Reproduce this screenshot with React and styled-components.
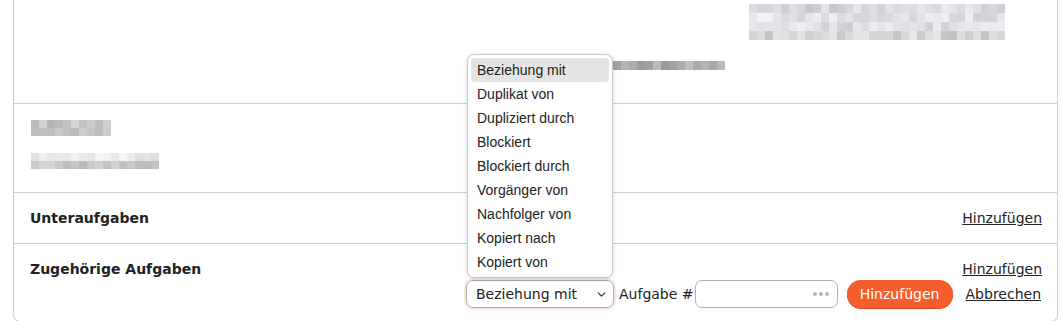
import React from 'react';
import styled, { createGlobalStyle } from 'styled-components';
import { ChevronDown } from 'lucide-react';

const GlobalStyle = createGlobalStyle`
  html, body {
    margin: 0;
    padding: 0;
    background: #fff;
    font-family: "DejaVu Sans", Verdana, sans-serif;
    font-size: 14px;
    color: #222;
  }
`;

const Page = styled.div`
  padding: 0 3px 0 13px;
  height: 321px;
  overflow: hidden;
`;

const Card = styled.div`
  width: 1045px;
  box-sizing: border-box;
  border: 1px solid #cfcfcf;
  border-top: none;
  border-radius: 0 0 7px 7px;
`;

const Section = styled.div`
  box-sizing: border-box;
  height: ${({ h }) => h}px;
  padding: ${({ pad }) => pad || '0'};
  border-bottom: ${({ last }) => (last ? 'none' : '1px solid #cfcfcf')};
  position: relative;
`;

const HeadRow = styled.div`
  display: flex;
  justify-content: space-between;
  align-items: center;
  line-height: 20px;
  padding: 0 15px 0 16px;
`;

const Title = styled.div`
  font-weight: bold;
  font-size: 14px;
`;

const Link = styled.a`
  color: #222;
  text-decoration: underline;
  cursor: pointer;
`;

const BlurBlock = styled.div`
  display: grid;
  grid-template-columns: repeat(${({ cols }) => cols}, 8px);
  grid-auto-rows: ${({ rowh }) => rowh || 8}px;
  margin: ${({ m }) => m || '0'};
  width: max-content;
`;

const Cell = styled.span`
  display: block;
`;

const TopBlurs = styled.div`
  display: flex;
  flex-direction: column;
  padding-top: 4px;
`;

const FormRow = styled.div`
  display: flex;
  justify-content: flex-end;
  align-items: center;
  padding-right: 16px;
  margin-top: 1px;
`;

const SelectWrap = styled.div`
  position: relative;
  width: 148px;
  height: 28px;
`;

const Select = styled.div`
  box-sizing: border-box;
  width: 100%;
  height: 100%;
  border: 1px solid #a9a9a9;
  border-radius: 7px;
  box-shadow: 0 0 0 2px rgba(245, 100, 60, 0.15);
  padding: 0 0 0 9px;
  display: flex;
  align-items: center;
  justify-content: space-between;
  font-size: 14px;
  color: #222;
  svg {
    margin-right: 5px;
  }
`;

const Menu = styled.ul`
  position: absolute;
  left: 1px;
  bottom: calc(100% + 2px);
  width: 146px;
  box-sizing: border-box;
  margin: 0;
  padding: 3px;
  list-style: none;
  background: #fff;
  border: 1px solid #c8c8c8;
  border-radius: 7px;
  box-shadow: 0 1px 4px rgba(0, 0, 0, 0.15);
  font-family: "Liberation Sans", Arial, sans-serif;
  font-size: 14px;
  color: #222;
  z-index: 2;
`;

const Option = styled.li`
  height: 24px;
  line-height: 24px;
  padding: 0 6px;
  border-radius: 4px;
  background: ${({ active }) => (active ? '#e4e4e4' : 'transparent')};
`;

const Label = styled.span`
  margin: 0 1px 0 5px;
`;

const InputWrap = styled.div`
  position: relative;
  width: 143px;
  height: 28px;
`;

const Input = styled.input`
  box-sizing: border-box;
  width: 100%;
  height: 100%;
  border: 1px solid #b0b0b0;
  border-radius: 7px;
  outline: none;
  font: inherit;
`;

const Dots = styled.span`
  position: absolute;
  right: 9px;
  top: 50%;
  transform: translateY(-50%);
  display: flex;
  gap: 2px;
  span {
    width: 4px;
    height: 4px;
    border-radius: 50%;
    background: #b5b5b5;
  }
`;

const Button = styled.button`
  margin-left: 9px;
  height: 28px;
  width: 106px;
  border: none;
  border-radius: 14px;
  background: #f55d2d;
  box-shadow: 0 1px 0 #d9491e;
  color: #fff;
  font-family: inherit;
  font-size: 14px;
  padding: 0;
`;

const Cancel = styled(Link)`
  margin-left: 13px;
`;

// deterministic gray shades for the pixelated (blurred) bits
const shade = (seed, base, spread) => {
  const v = Math.abs(Math.sin(seed * 12.9898) * 43758.5453) % 1;
  const g = Math.round(base + v * spread);
  return `rgb(${g}, ${g}, ${g + 4})`;
};

const Pixels = ({ rows, cols, base, spread, seed = 1, m, rowh }) => (
  <BlurBlock cols={cols} m={m} rowh={rowh}>
    {Array.from({ length: rows * cols }).map((_, i) => (
      <Cell key={i} style={{ background: shade(seed + i, base[Math.floor(i / cols)], spread) }} />
    ))}
  </BlurBlock>
);

const options = [
  'Beziehung mit',
  'Duplikat von',
  'Dupliziert durch',
  'Blockiert',
  'Blockiert durch',
  'Vorgänger von',
  'Nachfolger von',
  'Kopiert nach',
  'Kopiert von',
];

export default function App() {
  return (
    <>
      <GlobalStyle />
      <Page>
        <Card>
          <Section h={104}>
            <TopBlurs>
              <Pixels rows={4} cols={32} base={[200, 210, 205, 195]} spread={35} seed={3} m="0 0 0 735px" rowh={9} />
              <Pixels rows={1} cols={14} base={[155]} spread={40} seed={7} m="21px 0 0 599px" rowh={9} />
            </TopBlurs>
          </Section>
          <Section h={89} pad="16px 0 0 17px">
            <Pixels rows={2} cols={10} base={[180, 170]} spread={35} seed={11} />
            <Pixels rows={2} cols={16} base={[215, 185]} spread={30} seed={19} m="17px 0 0 0" />
          </Section>
          <Section h={51} pad="15px 0 0 0">
            <HeadRow>
              <Title>Unteraufgaben</Title>
              <Link>Hinzufügen</Link>
            </HeadRow>
          </Section>
          <Section h={77} pad="15px 0 0 0" last>
            <HeadRow>
              <Title>Zugehörige Aufgaben</Title>
              <Link>Hinzufügen</Link>
            </HeadRow>
            <FormRow>
              <SelectWrap>
                <Menu>
                  {options.map((o, i) => (
                    <Option key={o} active={i === 0}>{o}</Option>
                  ))}
                </Menu>
                <Select>
                  <span>Beziehung mit</span>
                  <ChevronDown size={13} strokeWidth={2.2} color="#333" />
                </Select>
              </SelectWrap>
              <Label>Aufgabe #</Label>
              <InputWrap>
                <Input />
                <Dots><span /><span /><span /></Dots>
              </InputWrap>
              <Button>Hinzufügen</Button>
              <Cancel>Abbrechen</Cancel>
            </FormRow>
          </Section>
        </Card>
      </Page>
    </>
  );
}
